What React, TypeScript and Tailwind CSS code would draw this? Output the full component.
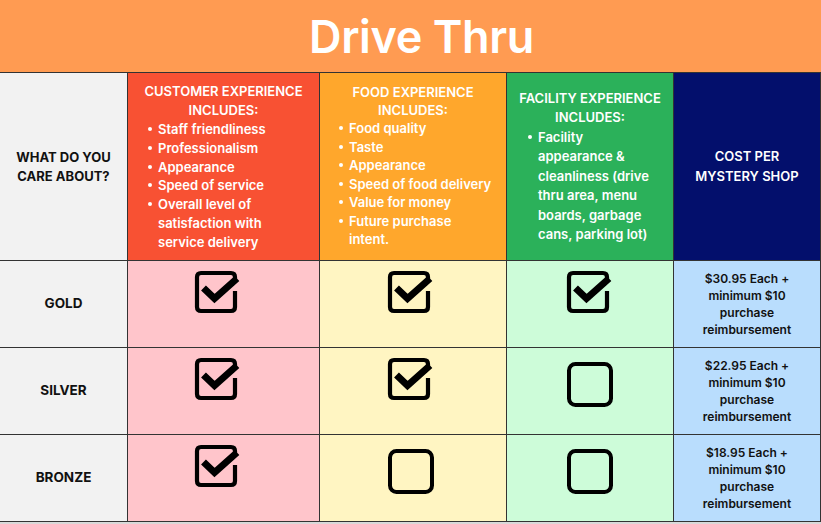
import React from "react";

const font = { fontFamily: "Inter, 'Noto Sans', sans-serif" };

function Checked() {
  return (
    <svg width="48" height="46" viewBox="0 0 48 46" fill="none">
      <path
        d="M41 21 V37 Q41 41 37 41 H7 Q3 41 3 37 V7 Q3 3 7 3 H37 Q41 3 41 7 V9"
        stroke="#000"
        strokeWidth="4.2"
        fill="none"
      />
      <path
        d="M9.5 18 L20.5 28.5 L43 8.5"
        stroke="#000"
        strokeWidth="7"
        strokeLinejoin="miter"
        fill="none"
      />
    </svg>
  );
}

function Empty() {
  return (
    <svg width="48" height="47" viewBox="0 0 48 47" fill="none">
      <rect x="3" y="3" width="42" height="41" rx="6.5" stroke="#000" strokeWidth="4" fill="none" />
    </svg>
  );
}

function Bullets({ items, left }: { items: string[][]; left: string }) {
  return (
    <ul className={`flex flex-col ${left}`}>
      {items.map((t) => (
        <li key={t.join()} className="flex whitespace-nowrap">
          <span className="w-[10px] shrink-0 flex pt-[7px]">
            <span className="block w-[4px] h-[4px] rounded-full bg-white" />
          </span>
          <span>
            {t.map((l, i) => (
              <React.Fragment key={l}>
                {i > 0 && <br />}
                {l}
              </React.Fragment>
            ))}
          </span>
        </li>
      ))}
    </ul>
  );
}

function Price({ p }: { p: string }) {
  return (
    <div className="bg-[#B9DDFD] flex items-center justify-center text-center text-[12px] leading-[17px] font-semibold text-[#111]">
      <div>
        {p} Each +
        <br />
        minimum $10
        <br />
        purchase
        <br />
        reimbursement
      </div>
    </div>
  );
}

function Label({ t }: { t: string }) {
  return (
    <div className="bg-[#F2F2F2] flex items-center justify-center text-[13.5px] font-bold text-[#111] pb-[1px]">
      {t}
    </div>
  );
}

function Cell({ kind, bg, pad }: { kind: "c" | "e"; bg: string; pad: string }) {
  return (
    <div className={`${bg} ${pad} flex justify-center items-start`}>
      <div className={kind === "c" ? "pt-[9px]" : "pt-[13px]"}>{kind === "c" ? <Checked /> : <Empty />}</div>
    </div>
  );
}

export default function App() {
  const rows: { name: string; c: ("c" | "e")[]; price: string }[] = [
    { name: "GOLD", c: ["c", "c", "c"], price: "$30.95" },
    { name: "SILVER", c: ["c", "c", "e"], price: "$22.95" },
    { name: "BRONZE", c: ["c", "e", "e"], price: "$18.95" },
  ];
  return (
    <div className="w-[821px] h-[524px] bg-white overflow-hidden" style={font}>
      <div className="h-[72px] bg-[#FF9B52] flex items-center justify-center">
        <h1 className="text-white text-[45px] font-semibold tracking-[-0.4px] leading-none pl-[22px]">Drive Thru</h1>
      </div>
      <div className="grid grid-cols-[127px_191px_186px_166px_146px] grid-rows-[187px_86px_86px_86px] gap-px bg-[#333] py-px pr-px">
        <div className="bg-[#F2F2F2] flex items-center justify-center text-center text-[13px] leading-[19px] font-bold text-[#111] pt-[1px]">
          <div>
            WHAT DO YOU
            <br />
            CARE ABOUT?
          </div>
        </div>
        <div className="bg-[#F85133] text-white flex flex-col justify-center text-[13px] leading-[18.9px] font-semibold pt-[1px]">
          <div className="text-center whitespace-nowrap">
            CUSTOMER EXPERIENCE
            <br />
            INCLUDES:
          </div>
          <Bullets
            left="pl-[20px]"
            items={[
              ["Staff friendliness"],
              ["Professionalism"],
              ["Appearance"],
              ["Speed of service"],
              ["Overall level of", "satisfaction with", "service delivery"],
            ]}
          />
        </div>
        <div className="bg-[#FFA72C] text-white flex flex-col justify-center text-[13px] leading-[18.4px] font-semibold pb-[2px]">
          <div className="text-center whitespace-nowrap">
            FOOD EXPERIENCE
            <br />
            INCLUDES:
          </div>
          <Bullets
            left="pl-[19px]"
            items={[
              ["Food quality"],
              ["Taste"],
              ["Appearance"],
              ["Speed of food delivery"],
              ["Value for money"],
              ["Future purchase", "intent."],
            ]}
          />
        </div>
        <div className="bg-[#2BB15A] text-white flex flex-col justify-center text-[13px] leading-[19.5px] font-semibold">
          <div className="text-center whitespace-nowrap">
            FACILITY EXPERIENCE
            <br />
            INCLUDES:
          </div>
          <Bullets
            left="pl-[21px]"
            items={[["Facility", "appearance &", "cleanliness (drive", "thru area, menu", "boards, garbage", "cans, parking lot)"]]}
          />
        </div>
        <div className="bg-[#030F6C] text-white flex items-center justify-center text-center text-[13px] leading-[20px] font-semibold pb-[2px]">
          <div>
            COST PER
            <br />
            MYSTERY SHOP
          </div>
        </div>
        {rows.map((r) => (
          <React.Fragment key={r.name}>
            <Label t={r.name} />
            <Cell kind={r.c[0]} bg="bg-[#FFC5CB]" pad="pr-[12px]" />
            <Cell kind={r.c[1]} bg="bg-[#FFF5C2]" pad="pr-[5px]" />
            <Cell kind={r.c[2]} bg="bg-[#CDFCD9]" pad="pr-[0px]" />
            <Price p={r.price} />
          </React.Fragment>
        ))}
      </div>
      <div className="h-[2px] bg-[#d9d9d9]" />
    </div>
  );
}
